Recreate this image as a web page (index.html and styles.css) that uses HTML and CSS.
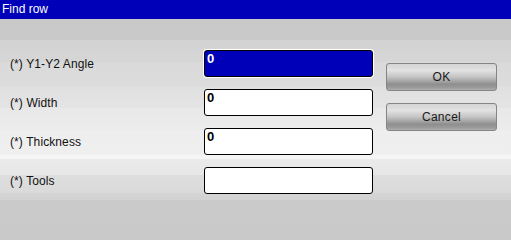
FILE: index.html
```html
<!DOCTYPE html>
<html>
<head>
<meta charset="utf-8">
<link rel="stylesheet" href="styles.css">
</head>
<body>
<div class="window">
  <div class="titlebar">Find row</div>
  <div class="content">
    <div class="form">
      <div class="label">(*) Y1-Y2 Angle</div>
      <div class="field active">0</div>
      <div class="label">(*) Width</div>
      <div class="field">0</div>
      <div class="label">(*) Thickness</div>
      <div class="field">0</div>
      <div class="label">(*) Tools</div>
      <div class="field"></div>
    </div>
    <div class="buttons">
      <div class="btn">OK</div>
      <div class="btn">Cancel</div>
    </div>
  </div>
</div>
</body>
</html>
```
FILE: styles.css
```css
html, body {
  margin: 0;
  padding: 0;
}
html {
  background: #c9c9c9;
}
body {
  width: 511px;
  min-height: 100vh;
  overflow: hidden;
  font-family: "Liberation Sans", Arial, sans-serif;
  background: #c9c9c9;
}
.window {
  width: 511px;
  min-height: 100vh;
  display: flex;
  flex-direction: column;
  background: linear-gradient(to bottom,
    #0000b8 0px, #0000b8 19px,
    #c8c8c8 19px, #c9c9c9 40px,
    #d3d3d3 40px, #d6d6d6 62px,
    #dadada 62px, #dcdcdc 86px,
    #e0e0e0 86px, #e4e4e4 108px,
    #e8e8e8 108px, #ececec 130px,
    #eeeeee 130px, #efefef 155px,
    #f5f5f5 155px, #f5f5f5 159px,
    #ebebeb 159px, #e6e6e6 175px,
    #dedede 175px, #dadada 193px,
    #d4d4d4 193px, #d2d2d2 200px,
    #cacaca 200px, #c9c9c9 221px) no-repeat;
  background-color: #c9c9c9;
}
.titlebar {
  height: 19px;
  line-height: 19px;
  color: #ffffff;
  font-size: 12px;
  padding-left: 2px;
  background: #0000b8;
}
.content {
  display: flex;
  padding: 31px 0 0 10px;
}
.form {
  display: grid;
  grid-template-columns: 194px 169px;
  row-gap: 12px;
  align-items: center;
}
.label {
  font-size: 12px;
  color: #111111;
  letter-spacing: 0.1px;
}
.field {
  box-sizing: border-box;
  height: 27px;
  background: #ffffff;
  border: 1px solid #000000;
  border-radius: 3px;
  padding: 1px 2px;
  font-size: 13px;
  font-weight: bold;
  line-height: 14px;
  color: #000000;
}
.field.active {
  background: #0000b8;
  color: #ffffff;
  box-shadow: 0 0 0 1px #ffffff;
}
.buttons {
  display: flex;
  flex-direction: column;
  gap: 12px;
  margin-left: 13px;
  padding-top: 13px;
}
.btn {
  box-sizing: border-box;
  width: 111px;
  height: 28px;
  border: 1px solid #858585;
  border-radius: 3px;
  background: linear-gradient(to bottom,
    #d4d4d4 0%, #e2e2e2 25%, #c4c4c4 50%, #8e8e8e 78%, #9c9c9c 92%, #b0b0b0 100%);
  display: flex;
  align-items: center;
  justify-content: center;
  font-size: 12px;
  color: #1a1a1a;
  letter-spacing: 0.3px;
}
```
